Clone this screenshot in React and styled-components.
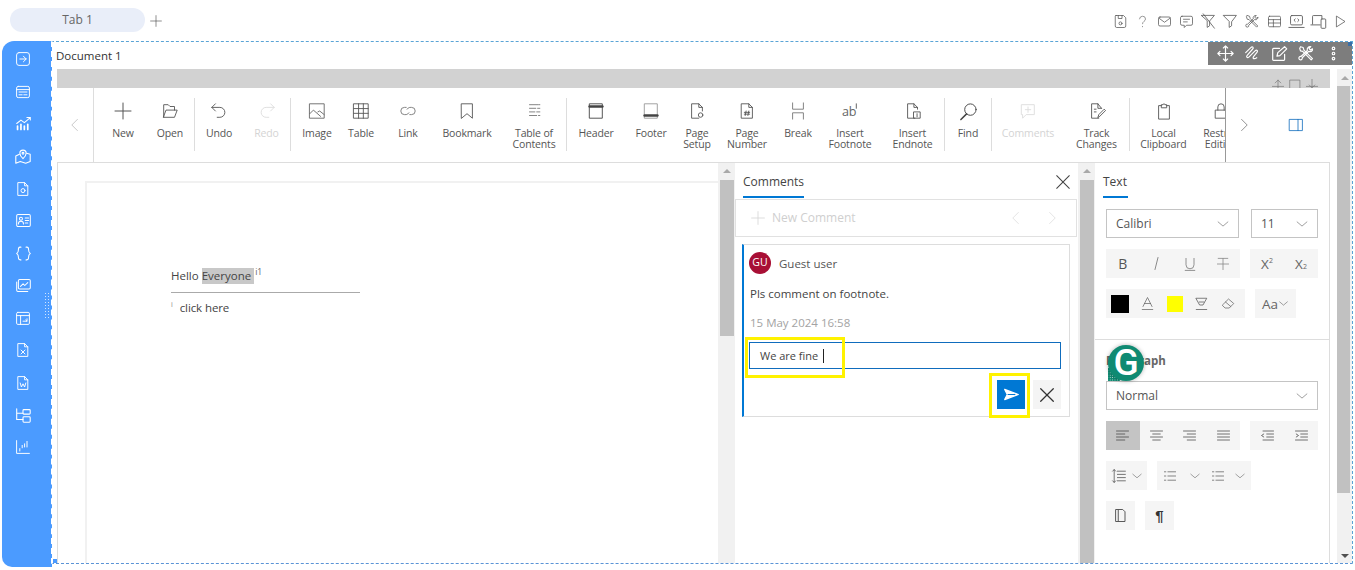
import React from 'react';
import styled, { createGlobalStyle } from 'styled-components';

const GlobalStyle = createGlobalStyle`
  html, body {
    margin: 0;
    padding: 0;
    background: #fff;
    overflow: hidden;
  }
  body {
    font-family: "Open Sans", "Liberation Sans", sans-serif;
    color: #444;
  }
  * { box-sizing: border-box; }
`;

const Page = styled.div`
  width: 1355px;
  height: 570px;
  display: flex;
  flex-direction: column;
`;

const TabBar = styled.header`
  height: 41px;
  display: flex;
  align-items: flex-start;
  padding: 8px 4px 0 10px;
`;

const Tab = styled.div`
  width: 135px;
  height: 24px;
  border-radius: 12px;
  background: #e9eef9;
  color: #666;
  font-size: 12px;
  line-height: 24px;
  text-align: center;
`;

const AddTab = styled.div`
  margin: 7px 0 0 5px;
  height: 12px;
  display: flex;
`;

const TopIcons = styled.div`
  margin-left: auto;
  display: flex;
  align-items: center;
  height: 26px;
`;

const TopCell = styled.div`
  width: 22px;
  display: flex;
  justify-content: center;
`;

const Svg = styled.svg`
  display: block;
  flex: none;
  fill: none;
  stroke: ${p => p.$c || '#555'};
  stroke-width: ${p => p.$w || 1};
  stroke-linecap: round;
  stroke-linejoin: round;
`;

const Ico = ({ s = 18, c, w, children }) => (
  <Svg viewBox="0 0 20 20" width={s} height={s} $c={c} $w={w}>{children}</Svg>
);

const Workspace = styled.main`
  display: flex;
  height: 526px;
`;

const Sidebar = styled.nav`
  position: relative;
  width: 50px;
  margin: 0 -1px 0 2px;
  border-radius: 12px 0 0 10px;
  background: #4b9bff;
  display: grid;
  grid-auto-rows: 32.35px;
  align-content: start;
  justify-items: center;
  align-items: center;
  padding: 2px 8px 0 0;
`;

const DragDots = styled.div`
  position: absolute;
  left: 42px;
  top: 251px;
  width: 6px;
  height: 28px;
  background-image: radial-gradient(#cfe4ff 1px, transparent 1px);
  background-size: 3px 3px;
`;

const Canvas = styled.section`
  position: relative;
  width: 1302px;
  height: 523px;
  border-style: dashed;
  border-width: 1px 1px 1px 2px;
  border-color: #5aa4d6 #5aa4d6 #5a94d6 #fff;
  overflow: hidden;
`;

const CornerHandle = styled.div`
  position: absolute;
  width: 4px;
  height: 4px;
  background: ${p => p.$c};
  ${p => (p.$top ? 'top: 0; right: 0;' : 'bottom: 0; left: 0;')}
`;

const DocTitle = styled.div`
  height: 27px;
  padding: 5px 0 0 3px;
  font-size: 11.5px;
  line-height: 17px;
  color: #333;
`;

const FloatingBar = styled.div`
  position: absolute;
  top: 0;
  right: 0;
  width: 144px;
  height: 23px;
  background: #7d7d7d;
  display: flex;
  align-items: center;
  padding-left: 9px;
  gap: 10px;
`;

const Body = styled.div`
  display: flex;
  height: 494px;
  margin-left: 4px;
`;

const Editor = styled.div`
  width: 1273px;
  margin-right: 7px;
  display: flex;
  flex-direction: column;
`;

const GreyBand = styled.div`
  height: 19px;
  background: #d2d2d2;
  display: flex;
  justify-content: flex-end;
  align-items: flex-start;
  gap: 3px;
  padding: 9px 11px 0 0;
  overflow: hidden;
`;

const Ribbon = styled.div`
  height: 75px;
  display: flex;
  border-bottom: 1px solid #ddd;
  background: #fff;
`;

const RibbonBack = styled.div`
  width: 37px;
  display: flex;
  align-items: center;
  justify-content: center;
  border-right: 1px solid #ddd;
`;

const RibbonItems = styled.div`
  width: 1131px;
  padding-left: 6px;
  display: flex;
  overflow: hidden;
`;

const RibbonItem = styled.div`
  width: ${p => p.$w}px;
  margin-left: ${p => p.$ml || 0}px;
  flex: none;
  display: flex;
  flex-direction: column;
  align-items: center;
  padding-top: 14px;
  color: ${p => (p.$off ? '#d4d4d4' : '#555')};
  font-size: 10.5px;
  line-height: 11px;
  letter-spacing: -0.15px;
  text-align: center;
  white-space: nowrap;
`;

const RibbonIcon = styled.div`
  height: 18px;
  display: flex;
  align-items: center;
  justify-content: center;
`;

const RibbonLabel = styled.div`
  margin-top: 8px;
`;

const RibbonSep = styled.div`
  width: 1px;
  flex: none;
  margin: 10px 0 11px;
  background: #ddd;
`;

const RibbonEnd = styled.div`
  flex: 1;
  display: flex;
  align-items: center;
  padding-left: 10px;
  border-left: 1px solid #999;
  gap: 36px;
`;

const Work = styled.div`
  flex: 1;
  min-height: 0;
  display: flex;
`;

const DocPane = styled.div`
  width: 661px;
  padding: 18px 0 0 27px;
  border-left: 1px solid #ddd;
  overflow: hidden;
`;

const Sheet = styled.div`
  height: 400px;
  border: 2px solid #f1f1f1;
  border-right: 0;
  padding: 84px 0 0 84px;
  font-size: 11.5px;
  color: #444;
`;

const HelloLine = styled.div`
  height: 18px;
  line-height: 17px;
  white-space: nowrap;
`;

const Highlight = styled.span`
  display: inline-block;
  height: 16px;
  line-height: 16px;
  padding-right: 3px;
  background: #c8c8c8;
`;

const Mark = styled.sup`
  font-size: 8.5px;
  line-height: 0;
  margin-left: 1px;
  color: #666;
`;

const FootRule = styled.div`
  width: 189px;
  height: 1px;
  margin-top: 7px;
  background: #aaa;
`;

const FootLine = styled.div`
  margin-top: 6px;
  line-height: 17px;
  white-space: nowrap;
  letter-spacing: -0.1px;
`;

const FootMark = styled.sup`
  font-size: 7px;
  line-height: 0;
  margin-right: 7px;
  color: #888;
`;

const ScrollTrack = styled.div`
  width: ${p => p.$w}px;
  flex: none;
  background: #f1f1f1;
  display: flex;
  flex-direction: column;
  align-items: ${p => (p.$outer ? 'flex-start' : 'center')};
`;

const Thumb = styled.div`
  width: ${p => p.$w || 14}px;
  height: ${p => p.$h}px;
  background: #c1c1c1;
  flex: none;
`;

const ArrowUp = styled.div`
  width: 0;
  height: 0;
  margin: ${p => p.$m || '6px 0 7px'};
  align-self: center;
  border-left: 4px solid transparent;
  border-right: 4px solid transparent;
  border-bottom: 4px solid #a9a9a9;
`;

const ArrowDown = styled.div`
  width: 0;
  height: 0;
  margin: auto 0 5px;
  align-self: center;
  border-left: 4px solid transparent;
  border-right: 4px solid transparent;
  border-top: 4px solid #505050;
`;

const CommentsPane = styled.aside`
  width: 343px;
  flex: none;
  padding-right: 1px;
`;

const PaneHead = styled.div`
  height: 36px;
  display: flex;
  align-items: flex-start;
  justify-content: space-between;
  padding: 10px 5px 0 8px;
`;

const PaneTab = styled.div`
  width: ${p => (p.$w ? `${p.$w}px` : 'auto')};
  height: 25px;
  border-bottom: 2px solid #0078d4;
  font-size: 12px;
  line-height: 17px;
  color: #444;
`;

const NewComment = styled.div`
  height: 38px;
  display: flex;
  align-items: center;
  gap: 20px;
  border: 1px solid #e1e1e1;
  padding: 0 16px 1px 14px;
  color: #cfcfcf;
  font-size: 12px;
`;

const NewCommentText = styled.span`
  margin-left: -14px;
  flex: 1;
`;

const Card = styled.div`
  height: 173px;
  margin: 7px 7px 0 7px;
  border: 1px solid #ddd;
  border-left: 2px solid #0078d4;
  padding: 7px 8px 0 5px;
  position: relative;
`;

const CardHead = styled.div`
  display: flex;
  align-items: center;
  gap: 8px;
  height: 22px;
  font-size: 11.5px;
  color: #555;
`;

const Avatar = styled.div`
  width: 22px;
  height: 22px;
  border-radius: 50%;
  background: #a80f35;
  color: #fff;
  font-size: 10.5px;
  line-height: 21px;
  text-align: center;
`;

const CommentText = styled.div`
  margin: 12px 0 0 1px;
  font-size: 11.5px;
  line-height: 16px;
  color: #444;
`;

const CommentDate = styled.div`
  margin: 13px 0 0 1px;
  font-size: 11.5px;
  line-height: 16px;
  color: #a3a3a3;
`;

const ReplyBox = styled.div`
  height: 27px;
  margin-top: 11px;
  border: 1px solid #0f6cbd;
  padding-left: 10px;
  font-size: 11px;
  line-height: 25px;
  color: #444;
  display: flex;
  align-items: center;
`;

const Caret = styled.span`
  width: 1px;
  height: 14px;
  margin-left: 5px;
  background: #222;
`;

const CardActions = styled.div`
  display: flex;
  justify-content: flex-end;
  gap: 8px;
  margin-top: 11px;
`;

const ActionButton = styled.div`
  width: 28px;
  height: 29px;
  background: ${p => (p.$primary ? '#0078d4' : '#f4f4f4')};
  display: flex;
  align-items: center;
  justify-content: center;
`;

const YellowBox = styled.div`
  position: absolute;
  left: ${p => p.$x}px;
  top: ${p => p.$y}px;
  width: ${p => p.$w}px;
  height: ${p => p.$h}px;
  border: 3px solid #fff200;
`;

const TextPane = styled.aside`
  width: 235px;
  flex: none;
  border-right: 1px solid #ddd;
  position: relative;
`;

const TextPaneHead = styled.div`
  height: 46px;
  padding: 10px 0 0 8px;
`;

const Section = styled.div`
  padding: 0 0 0 11px;
`;

const ControlRow = styled.div`
  display: flex;
  gap: ${p => p.$gap || 10}px;
  margin-bottom: ${p => p.$mb ?? 11}px;
`;

const Select = styled.div`
  width: ${p => p.$w}px;
  height: 29px;
  border: 1px solid #c4c4c4;
  display: flex;
  align-items: center;
  justify-content: space-between;
  padding: 0 8px 0 9px;
  font-size: 12px;
  color: #555;
`;

const ToolGroup = styled.div`
  width: ${p => p.$w}px;
  height: 29px;
  background: #f5f5f5;
  display: flex;
  align-items: center;
  padding: 0 ${p => p.$pad || 0}px;
`;

const ToolBtn = styled.div`
  width: ${p => p.$w || 33.5}px;
  height: 29px;
  flex: none;
  display: flex;
  align-items: center;
  justify-content: center;
  background: ${p => (p.$active ? '#c4c4c4' : 'transparent')};
  color: #555;
  font-size: 14px;
`;

const Swatch = styled.div`
  width: ${p => p.$s}px;
  height: ${p => p.$s}px;
  background: ${p => p.$c};
`;

const SupLabel = styled.span`
  font-size: 13.5px;
  color: #666;
`;

const Tiny = styled.span`
  font-size: 7px;
  color: #666;
  margin-bottom: ${p => (p.$up ? 6 : 0)}px;
  margin-top: ${p => (p.$up ? 0 : 6)}px;
`;

const PaneDivider = styled.div`
  height: 1px;
  background: #ddd;
  margin: 21px 0 0;
`;

const SectionLabel = styled.div`
  height: 41px;
  padding-top: 13px;
  font-size: 11.5px;
  line-height: 16px;
  font-weight: 700;
  color: #666;
`;

const Pilcrow = styled.span`
  font-family: "Liberation Sans", sans-serif;
  font-size: 15px;
  font-weight: 700;
  color: #333;
`;

const GrammarlyGrip = styled.div`
  position: absolute;
  left: 13px;
  top: 205px;
  width: 12px;
  height: 13px;
  background-color: #0f8a72;
  background-image: radial-gradient(#d8f3ec .7px, transparent .8px);
  background-size: 2.4px 2.4px;
  background-position: 1px 6px;
`;

const GrammarlyBadge = styled.div`
  position: absolute;
  left: 13px;
  top: 182px;
  width: 36px;
  height: 36px;
  border-radius: 50%;
  background: #0f8a72;
  box-shadow: 0 0 4px rgba(0, 0, 0, .3);
  color: #fff;
  font-family: "Roboto", sans-serif;
  font-size: 37px;
  font-weight: 500;
  line-height: 36px;
  text-align: center;
`;

const Chevron = ({ c = '#777', s = 14, dir = 'down', w = 1 }) => (
  <Ico s={s} c={c} w={w}>
    {dir === 'down' && <path d="M3 7l7 6 7-6" />}
    {dir === 'left' && <path d="M13 3l-7 7 7 7" />}
    {dir === 'right' && <path d="M7 3l7 7-7 7" />}
  </Ico>
);

const Close = ({ s = 14, c = '#444', w = 1.2 }) => (
  <Ico s={s} c={c} w={w}><path d="M3 3l14 14M17 3L3 17" /></Ico>
);

const Tools = ({ s = 16, c = '#555', w = 1 }) => (
  <Ico s={s} c={c} w={w}>
    <path d="M3 2l3 1 1 3 10 10-1.500 1.500L5.500 7.500 3 7 2 4z" />
    <path d="M17 6a3.500 3.500 0 0 1-4.500 1.500L5 15a2 2 0 1 1-1.500-1.500L11 6.500A3.500 3.500 0 0 1 15 2l-2 2 1.500 2L17 4.500z" />
  </Ico>
);

const topIcons = [
  <Ico key="save" s={15}><path d="M4 2h10l3 3v11a2 2 0 0 1-2 2H5a2 2 0 0 1-2-2V3a1 1 0 0 1 1-1z" /><path d="M7 2v4h5V2" /><circle cx="10" cy="12.500" r="2" /></Ico>,
  <Ico key="help" s={15} c="#777"><path d="M6 6.500A4 4 0 0 1 10 3a3.800 3.800 0 0 1 4 3.700c0 3-4 3-4 6.300" /><path d="M10 16.500v.500" /></Ico>,
  <Ico key="mail" s={15}><rect x="2" y="4" width="16" height="12" rx="2" /><path d="M2.500 5.500L10 11l7.500-5.500" /></Ico>,
  <Ico key="comment" s={15}><path d="M4 3h12a2 2 0 0 1 2 2v8a2 2 0 0 1-2 2h-6l-3 3v-3H4a2 2 0 0 1-2-2V5a2 2 0 0 1 2-2z" /><path d="M6 7h8M6 10.500h5" /></Ico>,
  <Ico key="filterOff" s={16}><path d="M2 3h16l-6 7v6l-3 2v-8z" /><path d="M4 1l14 18" /></Ico>,
  <Ico key="filter" s={16}><path d="M2 3h16l-6 8v5l-3 2v-7z" /></Ico>,
  <Tools key="tools" s={15} />,
  <Ico key="grid" s={15}><rect x="2" y="3" width="16" height="14" rx="1.500" /><path d="M2 7.500h16M2 12h16M8.500 7.500V17" /></Ico>,
  <Ico key="laptop" s={17}><rect x="3" y="3" width="14" height="11" rx="1.500" /><path d="M1 17h18M8.500 7L7 8.500 8.500 10M11.500 7L13 8.500 11.500 10" /></Ico>,
  <Ico key="devices" s={17}><path d="M3 13V4a1 1 0 0 1 1-1h10v3" /><path d="M1 14h11" /><rect x="13" y="7" width="5.500" height="11" rx="1" /></Ico>,
  <Ico key="play" s={15}><path d="M5 3l11 7-11 7z" /></Ico>,
];

const white = { c: '#fff', w: 1.2 };

const sideIcons = [
  <Ico key="a" s={16} {...white}><rect x="2" y="2" width="16" height="16" rx="3" /><path d="M6 10h8M10.500 6.500L14 10l-3.500 3.500" /></Ico>,
  <Ico key="b" s={16} {...white}><rect x="2" y="3" width="16" height="14" rx="2" /><path d="M2 7h16M5 10h10M5 13.500h4M11 13.500h4" /></Ico>,
  <Ico key="c" s={17} {...white}><path d="M2 10l5-4 4 3 7-6M14 3h4v3" /><path d="M3 13v4M7 11v6M11 13v4M15 11v6" strokeWidth="2" /></Ico>,
  <Ico key="d" s={18} {...white}><path d="M6 8L2 10v8l5-2 6 2 5-2V8l-4-1" /><path d="M10 13c-2-2-3.500-4-3.500-6a3.500 3.500 0 0 1 7 0c0 2-1.500 4-3.500 6z" /><circle cx="10" cy="7" r="1" /></Ico>,
  <Ico key="e" s={16} {...white}><path d="M4 2h8l4 4v12H4z" /><path d="M12 2v4h4" /><circle cx="10" cy="12" r="2.500" /></Ico>,
  <Ico key="f" s={17} {...white}><rect x="2" y="3" width="16" height="14" rx="1.500" /><circle cx="7" cy="8" r="1.800" /><path d="M4 14c0-4 6-4 6 0M12 7h4M12 10h4M12 13h3" /></Ico>,
  <Ico key="g" s={17} {...white}><path d="M7 2.500H6c-2 0-2 1.500-2 3S4 9 2 10c2 1 2 3 2 4.500s0 3 2 3h1M13 2.500h1c2 0 2 1.500 2 3s0 3.500 2 4.500c-2 1-2 3-2 4.500s0 3-2 3h-1" /></Ico>,
  <Ico key="h" s={17} {...white}><rect x="4" y="3" width="14" height="11" rx="1.500" /><path d="M2 6v9.500A1.500 1.500 0 0 0 3.500 17H15M6.500 11l3-3 2 2 3.500-3.500" /></Ico>,
  <Ico key="i" s={16} {...white}><rect x="2" y="3" width="16" height="15" rx="1.500" /><path d="M2 7h16M7 7v11M10 14h5l-1.500-1.500M15 14v-3" /></Ico>,
  <Ico key="j" s={16} {...white}><path d="M4 2h8l4 4v12H4z" /><path d="M12 2v4h4M7.500 10l5 5M12.500 10l-5 5" /></Ico>,
  <Ico key="k" s={16} {...white}><path d="M4 2h8l4 4v12H4z" /><path d="M12 2v4h4M6.500 10l1.500 5 2-4 2 4 1.500-5" /></Ico>,
  <Ico key="l" s={18} {...white}><path d="M3 3v12h7M3 8h7" /><rect x="10" y="4" width="8" height="5" rx="1" /><rect x="10" y="12" width="8" height="6" rx="1" /></Ico>,
  <Ico key="m" s={16} {...white}><path d="M2 2v16h16M6 12v3M9 8v3M12 6v4M15 3v7" /></Ico>,
];

const off = '#dcdcdc';

const ribbon = [
  { w: 46, label: 'New', icon: <Ico s={20}><path d="M10 2v16M2 10h16" /></Ico> },
  { w: 48, label: 'Open', icon: <Ico s={18}><path d="M3 17V3h5l2 2h5v4" /><path d="M3 17h12l3-8H6z" /></Ico> },
  { sep: true },
  { w: 48, label: 'Undo', icon: <Ico s={18}><path d="M6 2L2 6l4 4" /><path d="M2 6h9a5.500 5.500 0 0 1 0 11H8" /></Ico> },
  { w: 47, label: 'Redo', off: true, icon: <Ico s={18} c={off}><path d="M14 2l4 4-4 4" /><path d="M18 6H9a5.500 5.500 0 0 0 0 11h3" /></Ico> },
  { sep: true },
  { w: 52, label: 'Image', icon: <Ico s={18} c="#666"><rect x="2" y="2" width="16" height="16" /><path d="M2 13l4-4 8 7M11 11l2-1 5 4" /></Ico> },
  { w: 36, label: 'Table', icon: <Ico s={18}><rect x="2" y="2" width="16" height="16" /><path d="M2 7.300h16M2 12.600h16M7.300 2v16M12.600 2v16" /></Ico> },
  { w: 58, label: 'Link', icon: <Ico s={18} c="#777"><path d="M8 6H6a4 4 0 0 0 0 8h2a4 4 0 0 0 3-2" /><path d="M12 14h2a4 4 0 0 0 0-8h-2a4 4 0 0 0-3 2" /></Ico> },
  { w: 60, label: 'Bookmark', icon: <Ico s={18}><path d="M4 2h12v16l-6-5-6 5z" /></Ico> },
  { w: 64, ml: 5, label: 'Table of', label2: 'Contents', icon: <Ico s={18} c="#777"><path d="M5 3h10M16 3h.5M5 7h7M14 7h2.500M5 11h6M13 11h3.500M5 15h8M15 15h1.500" /></Ico> },
  { sep: true },
  { w: 58, label: 'Header', icon: <Ico s={18} c="#444"><rect x="3" y="2" width="14" height="16" /><path d="M3 5h14" strokeWidth="3" /></Ico> },
  { w: 52, label: 'Footer', icon: <Ico s={18} c="#444"><rect x="3" y="2" width="14" height="16" stroke="#999" /><path d="M3 15h14" strokeWidth="3" /></Ico> },
  { w: 40, label: 'Page', label2: 'Setup', icon: <Ico s={18}><path d="M12 18H4V2h8l4 4v4" /><path d="M12 2v4h4" /><circle cx="14" cy="14.500" r="2.500" /></Ico> },
  { w: 60, label: 'Page', label2: 'Number', icon: <Ico s={18}><path d="M4 2h8l4 4v12H4z" /><path d="M12 2v4h4M9 10l-1 5M12 10l-1 5M7 11.500h6M7 13.500h6" /></Ico> },
  { w: 42, label: 'Break', icon: <Ico s={18} c="#777"><path d="M4 1v7h12V1M4 19v-7h12v7" /></Ico> },
  { w: 62, label: 'Insert', label2: 'Footnote', icon: <Ico s={18} c="#555"><text x="1" y="16" fontSize="14" stroke="none" fill="#666" fontFamily="Open Sans">ab</text><path d="M17 2v5" /></Ico> },
  { w: 63, label: 'Insert', label2: 'Endnote', icon: <Ico s={18}><path d="M12 18H4V2h7l4 4v2" /><path d="M11 2v4h4" /><rect x="11" y="11" width="7" height="7" /><path d="M14.500 13v3.500" /></Ico> },
  { sep: true },
  { w: 46, label: 'Find', icon: <Ico s={19} c="#444"><circle cx="12" cy="8" r="6" /><path d="M8 12.500L2 18.500" strokeWidth="1.600" /></Ico> },
  { sep: true },
  { w: 72, label: 'Comments', off: true, icon: <Ico s={18} c={off}><path d="M3 3h14v11H8l-4 4v-4H3z" /><path d="M10 5.500v6M7 8.500h6" /></Ico> },
  { w: 65, label: 'Track', label2: 'Changes', icon: <Ico s={18}><path d="M15 7l-4-5H4v16h8" /><path d="M11 2v5h4M7 8h2M7 11h2M11 17l1-3 6-6 1.500 1.500-6 6z" /></Ico> },
  { sep: true },
  { w: 67, label: 'Local', label2: 'Clipboard', icon: <Ico s={18}><path d="M7 4H4v15h12V4h-3" /><path d="M7 6V3h2a1 1 0 0 1 2 0h2v3z" /></Ico> },
  { w: 48, label: 'Restrict', label2: 'Editing', icon: <Ico s={18}><path d="M4 9h12v9H4zM6.500 9V5.500a3.500 3.500 0 0 1 7 0V9" /></Ico> },
];

const App = () => (
  <Page>
    <GlobalStyle />
    <TabBar>
      <Tab>Tab 1</Tab>
      <AddTab><Ico s={12} c="#444"><path d="M10 1v18M1 10h18" /></Ico></AddTab>
      <TopIcons>{topIcons.map(icon => <TopCell key={icon.key}>{icon}</TopCell>)}</TopIcons>
    </TabBar>
    <Workspace>
      <Sidebar>
        {sideIcons}
        <DragDots />
      </Sidebar>
      <Canvas>
        <DocTitle>Document 1</DocTitle>
        <FloatingBar>
          <Ico s={17} c="#fff" w={1.4}><path d="M10 1v18M1 10h18M7.500 3.500L10 1l2.500 2.500M7.500 16.500L10 19l2.500-2.500M3.500 7.500L1 10l2.500 2.500M16.500 7.500L19 10l-2.500 2.500" /></Ico>
          <Ico s={17} c="#fff" w={1.4}><path d="M2 9l6-6c2-2 4 0 2 2l-6 7c-2 2 0 4 2 2l7-7c2-2 4 0 2 2l-4 5c-1 2 1 3 4 1" /></Ico>
          <Ico s={17} c="#fff" w={1.4}><path d="M16 11v6a1 1 0 0 1-1 1H3a1 1 0 0 1-1-1V5a1 1 0 0 1 1-1h7" /><path d="M7 13l1-4 8-7 2.500 2.500-8 8z" /></Ico>
          <Tools s={17} c="#fff" w={1.4} />
          <Ico s={17} c="#fff" w={1.4}><circle cx="10" cy="4" r="1.500" /><circle cx="10" cy="10" r="1.500" /><circle cx="10" cy="16" r="1.500" /></Ico>
        </FloatingBar>
        <CornerHandle $top $c="#3a6ea5" />
        <CornerHandle $c="#4b9bff" />
        <Body>
          <Editor>
            <GreyBand>
              <Ico s={14} c="#777"><path d="M2 12h16M10 14V3M6 7l4-4 4 4" /></Ico>
              <Ico s={14} c="#777"><rect x="3" y="3" width="14" height="14" /></Ico>
              <Ico s={14} c="#777"><path d="M2 12h16M10 2v12M6 10l4 4 4-4" /></Ico>
            </GreyBand>
            <Ribbon>
              <RibbonBack><Chevron dir="left" s={16} c="#bbb" /></RibbonBack>
              <RibbonItems>
                {ribbon.map((item, i) => (item.sep
                  ? <RibbonSep key={i} />
                  : (
                    <RibbonItem key={i} $w={item.w} $ml={item.ml} $off={item.off}>
                      <RibbonIcon>{item.icon}</RibbonIcon>
                      <RibbonLabel>{item.label}{item.label2 && <><br />{item.label2}</>}</RibbonLabel>
                    </RibbonItem>
                  )))}
              </RibbonItems>
              <RibbonEnd>
                <Chevron dir="right" s={16} c="#777" />
                <Ico s={16} c="#0f6cbd"><rect x="2" y="3" width="16" height="14" /><path d="M12.500 3v14" /></Ico>
              </RibbonEnd>
            </Ribbon>
            <Work>
              <DocPane>
                <Sheet>
                  <HelloLine>Hello <Highlight>Everyone</Highlight><Mark>i1</Mark></HelloLine>
                  <FootRule />
                  <FootLine><FootMark>i</FootMark>click here</FootLine>
                </Sheet>
              </DocPane>
              <ScrollTrack $w={17}>
                <ArrowUp />
                <Thumb $h={156} />
              </ScrollTrack>
              <CommentsPane>
                <PaneHead>
                  <PaneTab>Comments</PaneTab>
                  <Close s={18} />
                </PaneHead>
                <NewComment>
                  <Ico s={16} c="#d4d4d4"><path d="M10 2v16M2 10h16" /></Ico>
                  <NewCommentText>New Comment</NewCommentText>
                  <Chevron dir="left" s={16} c="#ddd" />
                  <Chevron dir="right" s={16} c="#ddd" />
                </NewComment>
                <Card>
                  <CardHead><Avatar>GU</Avatar>Guest user</CardHead>
                  <CommentText>Pls comment on footnote.</CommentText>
                  <CommentDate>15 May 2024 16:58</CommentDate>
                  <ReplyBox>We are fine<Caret /></ReplyBox>
                  <CardActions>
                    <ActionButton $primary>
                      <Ico s={17} c="#fff" w={1.4}>
                        <path d="M2 4l16 6-16 6 3-6z" fill="#fff" />
                        <path d="M6 10h8" stroke="#0078d4" />
                      </Ico>
                    </ActionButton>
                    <ActionButton><Close s={18} c="#333" w={1.4} /></ActionButton>
                  </CardActions>
                  <YellowBox $x={1} $y={92} $w={100} $h={41} />
                  <YellowBox $x={245} $y={128} $w={41} $h={45} />
                </Card>
              </CommentsPane>
              <ScrollTrack $w={17}>
                <ArrowUp />
                <Thumb $h={383} />
              </ScrollTrack>
              <TextPane>
                <TextPaneHead><PaneTab $w={25}>Text</PaneTab></TextPaneHead>
                <Section>
                  <ControlRow $gap={12}>
                    <Select $w={133}>Calibri<Chevron /></Select>
                    <Select $w={67}>11<Chevron /></Select>
                  </ControlRow>
                  <ControlRow>
                    <ToolGroup $w={134}>
                      <ToolBtn>B</ToolBtn>
                      <ToolBtn><Ico s={15} c="#666"><path d="M12 2L8 18" /></Ico></ToolBtn>
                      <ToolBtn><Ico s={16} c="#777"><path d="M5 3v8a5 5 0 0 0 10 0V3M4 18h12" /></Ico></ToolBtn>
                      <ToolBtn><Ico s={16} c="#888"><path d="M4 3h12M10 3v14M3 10h14" /></Ico></ToolBtn>
                    </ToolGroup>
                    <ToolGroup $w={68}>
                      <ToolBtn $w={34}><SupLabel>X</SupLabel><Tiny $up>2</Tiny></ToolBtn>
                      <ToolBtn $w={34}><SupLabel>X</SupLabel><Tiny>2</Tiny></ToolBtn>
                    </ToolGroup>
                  </ControlRow>
                  <ControlRow $mb={0}>
                    <ToolGroup $w={139} $pad={5}>
                      <ToolBtn $w={18}><Swatch $s={18} $c="#000" /></ToolBtn>
                      <ToolBtn $w={37}><Ico s={15} c="#666"><path d="M4 14L10 2l6 12M6 10h8M3 18h14" /></Ico></ToolBtn>
                      <ToolBtn $w={17}><Swatch $s={16} $c="#ff0" /></ToolBtn>
                      <ToolBtn $w={37}><Ico s={15} c="#555"><path d="M3 3h14l-5 9H8zM7 8h6M3 18h14" /></Ico></ToolBtn>
                      <ToolBtn $w={17}><Ico s={15} c="#666"><path d="M2 12l8-8 7 6-6 6H6zM6 8l7 6" /></Ico></ToolBtn>
                    </ToolGroup>
                    <ToolGroup $w={41}>
                      <ToolBtn $w={41}><SupLabel>Aa</SupLabel><Chevron s={11} c="#555" /></ToolBtn>
                    </ToolGroup>
                  </ControlRow>
                </Section>
                <PaneDivider />
                <Section>
                  <SectionLabel>Paragraph</SectionLabel>
                  <ControlRow>
                    <Select $w={212}>Normal<Chevron /></Select>
                  </ControlRow>
                  <ControlRow>
                    <ToolGroup $w={134}>
                      <ToolBtn $active><Ico s={15} c="#444"><path d="M2 4h16M2 8h11M2 12h16M2 16h11" /></Ico></ToolBtn>
                      <ToolBtn><Ico s={15} c="#444"><path d="M2 4h16M5 8h10M2 12h16M5 16h10" /></Ico></ToolBtn>
                      <ToolBtn><Ico s={15} c="#444"><path d="M2 4h16M7 8h11M2 12h16M7 16h11" /></Ico></ToolBtn>
                      <ToolBtn><Ico s={15} c="#444"><path d="M2 4h16M2 8h16M2 12h16M2 16h16" /></Ico></ToolBtn>
                    </ToolGroup>
                    <ToolGroup $w={68}>
                      <ToolBtn $w={34}><Ico s={15} c="#444"><path d="M4 4h14M9 8h9M9 12h9M4 16h14M5 8l-3 2 3 2" /></Ico></ToolBtn>
                      <ToolBtn $w={34}><Ico s={15} c="#444"><path d="M2 4h16M9 8h9M9 12h9M2 16h16M3 8l3 2-3 2" /></Ico></ToolBtn>
                    </ToolGroup>
                  </ControlRow>
                  <ControlRow>
                    <ToolGroup $w={41}>
                      <ToolBtn $w={25}><Ico s={16} c="#555"><path d="M8 4h10M8 8h10M8 12h10M8 16h10M4 2v16M2 4l2-2 2 2M2 16l2 2 2-2" /></Ico></ToolBtn>
                      <Chevron s={12} c="#666" />
                    </ToolGroup>
                    <ToolGroup $w={94}>
                      <ToolBtn $w={26}><Ico s={14} c="#555"><path d="M7 4h11M7 10h11M7 16h11M2 4h2M2 10h2M2 16h2" /></Ico></ToolBtn>
                      <ToolBtn $w={24}><Chevron s={12} c="#666" /></ToolBtn>
                      <ToolBtn $w={22}><Ico s={14} c="#555"><path d="M7 4h11M7 10h11M7 16h11M2 4h2M2 10h2M2 16h2" /></Ico></ToolBtn>
                      <ToolBtn $w={22}><Chevron s={12} c="#666" /></ToolBtn>
                    </ToolGroup>
                  </ControlRow>
                  <ControlRow $gap={10}>
                    <ToolGroup $w={29}>
                      <ToolBtn $w={29}><Ico s={15} c="#555" w={1.3}><path d="M4 2h9l3 3v13H4zM7 2v16" /></Ico></ToolBtn>
                    </ToolGroup>
                    <ToolGroup $w={29}>
                      <ToolBtn $w={29}><Pilcrow>¶</Pilcrow></ToolBtn>
                    </ToolGroup>
                  </ControlRow>
                </Section>
                <GrammarlyGrip />
                <GrammarlyBadge>G</GrammarlyBadge>
              </TextPane>
            </Work>
          </Editor>
          <ScrollTrack $w={15} $outer>
            <ArrowUp $m="7px 0 6px" />
            <Thumb $w={13} $h={407} />
            <ArrowDown />
          </ScrollTrack>
        </Body>
      </Canvas>
    </Workspace>
  </Page>
);

export default App;
